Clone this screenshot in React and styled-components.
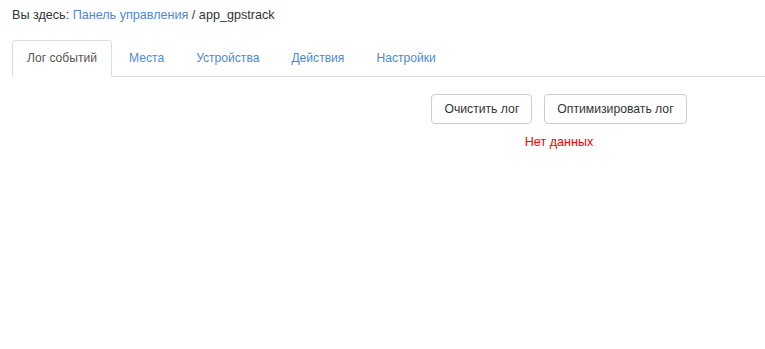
import React from 'react'
import styled, { createGlobalStyle } from 'styled-components'

const Global = createGlobalStyle`
  body {
    margin: 0;
    background: #fff;
    font-family: "Liberation Sans", Arial, sans-serif;
    font-size: 12.6px;
    color: #333;
  }
`

const Page = styled.div`
  padding: 6px 0 0 12px;
`

const Crumbs = styled.div`
  line-height: 18px;
  height: 18px;
  margin-bottom: 16px;
`

const Link = styled.a`
  color: #4f88d2;
  text-decoration: none;
`

const Tabs = styled.ul`
  display: flex;
  margin: 0;
  padding: 0;
  list-style: none;
  border-bottom: 1px solid #ddd;
  font-size: 12.1px;
`

const Tab = styled.li`
  margin-bottom: -1px;
  margin-right: 2px;
  padding: 8px 14px 9px;
  line-height: 18px;
  border: 1px solid ${p => (p.active ? '#ddd' : 'transparent')};
  border-bottom-color: ${p => (p.active ? '#fff' : 'transparent')};
  border-radius: 4px 4px 0 0;
  background: ${p => (p.active ? '#fff' : 'transparent')};
  color: ${p => (p.active ? '#555' : '#4f88d2')};
  white-space: nowrap;
`

const Panel = styled.div`
  display: flex;
  flex-direction: column;
  align-items: center;
  width: 254px;
  margin: 17px 0 0 420px;
`

const Buttons = styled.div`
  display: flex;
  gap: 12px;
`

const Button = styled.button`
  font-family: inherit;
  font-size: 12.2px;
  color: #333;
  background: #fff;
  border: 1px solid #ccc;
  border-radius: 4px;
  height: 30px;
  padding: 0 12px;
  white-space: nowrap;
  cursor: pointer;
`

const Empty = styled.div`
  color: #f00;
  margin-top: 9px;
  line-height: 18px;
`

const tabs = ['Лог событий', 'Места', 'Устройства', 'Действия', 'Настройки']

export default function App() {
  return (
    <>
      <Global />
      <Page>
        <Crumbs>
          Вы здесь: <Link href="#">Панель управления</Link> / app_gpstrack
        </Crumbs>
        <Tabs>
          {tabs.map((t, i) => (
            <Tab key={t} active={i === 0}>{t}</Tab>
          ))}
        </Tabs>
        <Panel>
          <Buttons>
            <Button>Очистить лог</Button>
            <Button>Оптимизировать лог</Button>
          </Buttons>
          <Empty>Нет данных</Empty>
        </Panel>
      </Page>
    </>
  )
}
